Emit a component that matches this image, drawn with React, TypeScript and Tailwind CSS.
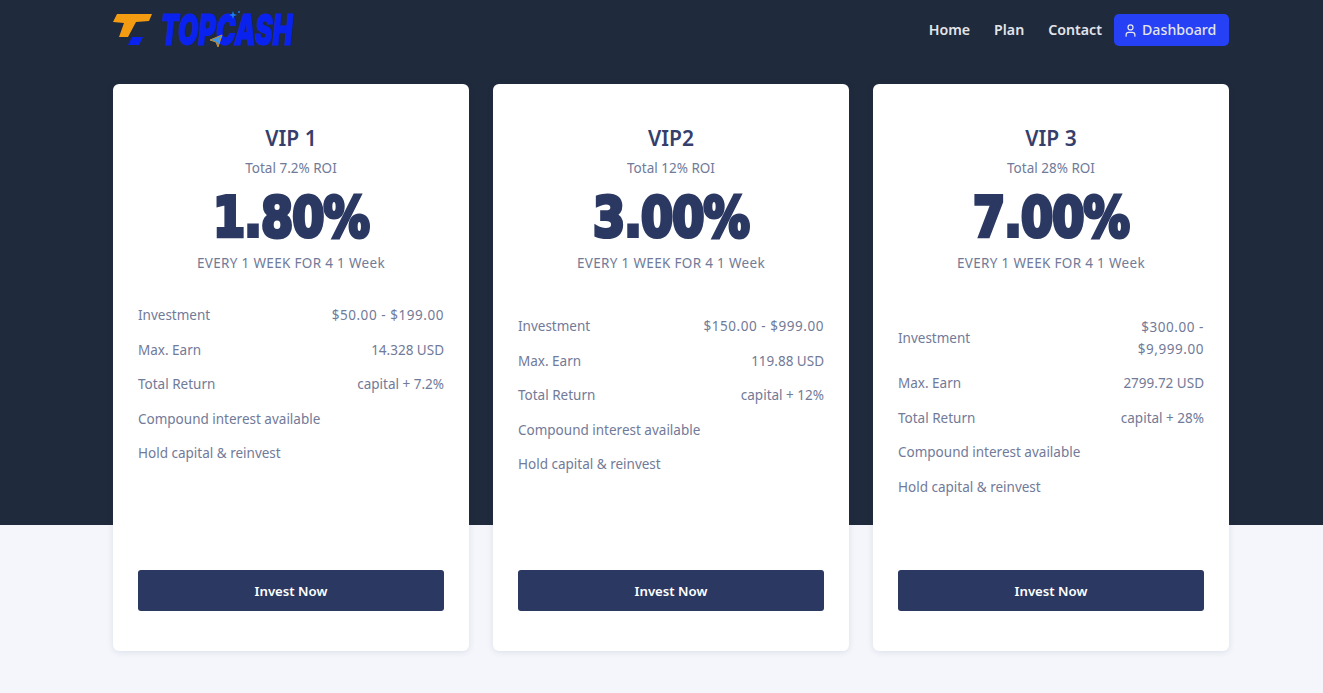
import { User } from "lucide-react";

type Plan = {
  name: string;
  total: string;
  rate: string;
  invest: string;
  earn: string;
  ret: string;
  bodyClass: string;
  wrap?: boolean;
};

const plans: Plan[] = [
  { name: "VIP 1", total: "Total 7.2% ROI", rate: "1.80%", invest: "$50.00 - $199.00", earn: "14.328 USD", ret: "capital + 7.2%", bodyClass: "mt-[25px]" },
  { name: "VIP2", total: "Total 12% ROI", rate: "3.00%", invest: "$150.00 - $999.00", earn: "119.88 USD", ret: "capital + 12%", bodyClass: "mt-[36.2px]" },
  { name: "VIP 3", total: "Total 28% ROI", rate: "7.00%", invest: "$300.00 - $9,999.00", earn: "2799.72 USD", ret: "capital + 28%", bodyClass: "mt-[37px]", wrap: true },
];

function Logo() {
  return (
    <div className="flex items-center h-[60px] w-[180px]">
      <svg width="40" height="34" viewBox="0 0 40 34" className="shrink-0">
        <path d="M4 1 H39 L36 8 L23 9 L15 24 H6 L11 10 L0 9 Z" fill="#f39c12" />
        <path d="M19 24 H30 L26 32 H15 Z" fill="#0a22f0" />
      </svg>
      <span className="relative ml-[8px] block w-[132px] h-[34px]">
        <span className="block origin-left scale-x-[0.63] whitespace-nowrap text-[42px] leading-[34px] font-black italic text-[#0a22f0] [-webkit-text-stroke:1px_#0a22f0] font-['Inter',sans-serif]">
          TOPCASH
        </span>
        <svg width="14" height="14" viewBox="0 0 14 14" className="absolute left-[48px] top-[21px]">
          <path d="M1 6 L13 1 L9 13 L7 8 Z" fill="#3b9bea" stroke="#c98a2b" strokeWidth="1" />
        </svg>
        <svg width="12" height="10" viewBox="0 0 12 10" className="absolute left-[68px] top-[-3px]">
          <path d="M4 1 L5 4 L8 5 L5 6 L4 9 L3 6 L0 5 L3 4 Z" fill="#1e7bf0" />
          <circle cx="10" cy="2" r="1" fill="#1e7bf0" />
        </svg>
      </span>
    </div>
  );
}

function Row({ label, value, wrap, wide }: { label: string; value: string; wrap?: boolean; wide?: boolean }) {
  return (
    <div className="flex items-center justify-between py-[6px]">
      <span className="shrink-0">{label}</span>
      <span className={`${wrap ? "w-[110px] leading-[22px]" : ""} ${wide ? "tracking-[0.55px]" : ""} text-right`}>{value}</span>
    </div>
  );
}

function Card({ plan }: { plan: Plan }) {
  return (
    <div className="flex flex-col h-[567px] rounded-[6px] bg-white shadow-[0_1px_6px_rgba(40,55,100,0.12)] px-[25px] pt-[39px] pb-[40px]">
      <div className="text-center">
        <h3 className="text-[21px] leading-[30px] font-semibold text-[#363f6b]">{plan.name}</h3>
        <p className="mt-[5px] text-[13.5px] leading-[20px] text-[#717a98]">{plan.total}</p>
        <div className="mt-[9px] h-[60px] whitespace-nowrap scale-x-[0.84] font-['DejaVu_Sans',sans-serif] text-[55px] leading-[60px] font-bold tracking-[-1px] text-[#2a3862] [-webkit-text-stroke:4px_#2a3862]">
          {plan.rate}
        </div>
        <p className="mt-[6px] text-[13.5px] leading-[20px] tracking-[0.32px] text-[#717a98]">EVERY 1 WEEK FOR 4 1 Week</p>
      </div>
      <div className={`${plan.bodyClass} flex flex-col text-[13.5px] leading-[22.5px] text-[#717a98]`}>
        <Row label="Investment" value={plan.invest} wrap={plan.wrap} wide />
        <Row label="Max. Earn" value={plan.earn} />
        <Row label="Total Return" value={plan.ret} />
        <div className="py-[6px]">Compound interest available</div>
        <div className="py-[6px]">Hold capital &amp; reinvest</div>
      </div>
      <button className="mt-auto h-[41px] w-full shrink-0 rounded-[3px] bg-[#2a3862] pt-[2px] text-[13.2px] font-semibold text-white">
        Invest Now
      </button>
    </div>
  );
}

export default function App() {
  return (
    <div className="relative h-[693px] overflow-hidden bg-[#f4f6fb] font-['Noto_Sans',sans-serif]">
      <div className="absolute inset-x-0 top-0 h-[525px] bg-[#1f2a3c]" />
      <div className="relative ml-[113px] w-[1116px]">
        <header className="flex h-[60px] items-center justify-between">
          <Logo />
          <nav className="flex items-center text-[14.2px] font-semibold text-[#e3e5ea]">
            <a className="mr-[24px]">Home</a>
            <a className="mr-[24px]">Plan</a>
            <a className="mr-[12px]">Contact</a>
            <a className="flex h-[32px] w-[115px] items-center justify-start gap-[4px] rounded-[5px] bg-[#2540f5] pl-[9px] text-[14.2px] font-medium">
              <User size={15} strokeWidth={2} />
              Dashboard
            </a>
          </nav>
        </header>
        <div className="mt-[24px] grid grid-cols-3 gap-[24px]">
          {plans.map((p) => (
            <Card key={p.name} plan={p} />
          ))}
        </div>
      </div>
    </div>
  );
}
